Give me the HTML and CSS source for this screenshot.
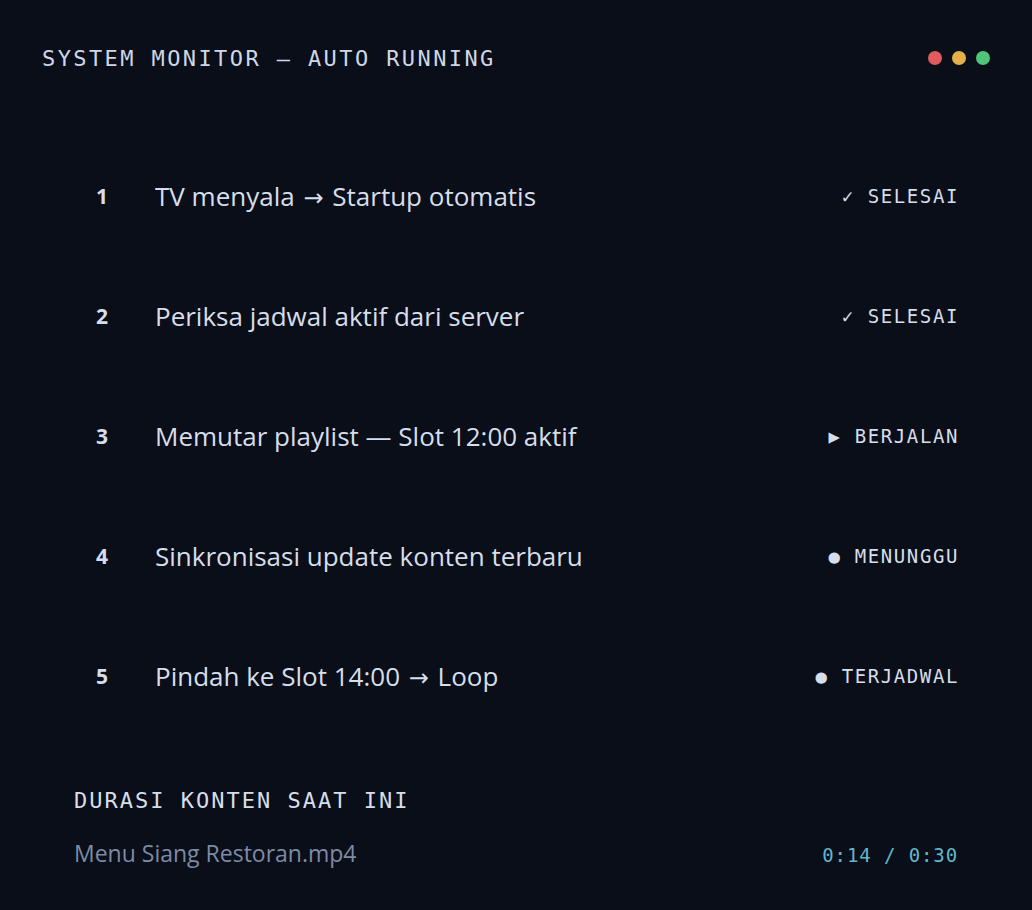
FILE: index.html
```html
<!DOCTYPE html>
<html>
<head>
<meta charset="utf-8">
<link rel="stylesheet" href="styles.css">
</head>
<body>
<div class="screen">
  <header class="top">
    <div class="title">SYSTEM MONITOR — AUTO RUNNING</div>
    <div class="dots"><span class="dot red"></span><span class="dot yellow"></span><span class="dot green"></span></div>
  </header>
  <ol class="steps">
    <li class="step"><span class="num">1</span><span class="label">TV menyala <span class="arr">→</span> Startup otomatis</span><span class="status">✓ SELESAI</span></li>
    <li class="step"><span class="num">2</span><span class="label">Periksa jadwal aktif dari server</span><span class="status">✓ SELESAI</span></li>
    <li class="step"><span class="num">3</span><span class="label">Memutar playlist — Slot 12:00 aktif</span><span class="status">▶ BERJALAN</span></li>
    <li class="step"><span class="num">4</span><span class="label">Sinkronisasi update konten terbaru</span><span class="status">● MENUNGGU</span></li>
    <li class="step"><span class="num">5</span><span class="label">Pindah ke Slot 14:00 <span class="arr">→</span> Loop</span><span class="status">● TERJADWAL</span></li>
  </ol>
  <section class="duration">
    <div class="dur-title">DURASI KONTEN SAAT INI</div>
    <div class="dur-row"><span class="file">Menu Siang Restoran.mp4</span><span class="time">0:14 / 0:30</span></div>
  </section>
</div>
</body>
</html>
```
FILE: styles.css
```css
html, body {
  margin: 0;
  padding: 0;
  background: #0a0e18;
}
.screen {
  width: 1032px;
  height: 910px;
  box-sizing: border-box;
  padding: 44px 42px 0 42px;
  color: #d6deeb;
  font-family: "Open Sans", "Noto Sans", sans-serif;
  font-variant-ligatures: none;
}
.top {
  display: flex;
  justify-content: space-between;
  align-items: center;
  height: 28px;
}
.title {
  font-family: "DejaVu Sans Mono", monospace;
  font-size: 22px;
  letter-spacing: 2.4px;
  color: #cfd7e6;
}
.dots {
  display: flex;
  gap: 10px;
}
.dot {
  width: 14px;
  height: 14px;
  border-radius: 50%;
}
.red { background: #e05a5e; }
.yellow { background: #e5b04a; }
.green { background: #4fc47b; }
.steps {
  list-style: none;
  margin: 64px 0 0 0;
  padding: 0 32px 0 54px;
}
.step {
  display: flex;
  align-items: center;
  height: 120px;
}
.num {
  width: 59px;
  font-weight: 700;
  font-size: 21px;
  color: #d6deeb;
}
.label {
  flex: 1;
  font-size: 26px;
  color: #d6deeb;
}
.arr {
  font-family: "DejaVu Sans", sans-serif;
  font-size: 24px;
  margin: 0 2px;
}
.status {
  font-family: "DejaVu Sans Mono", monospace;
  font-size: 19px;
  letter-spacing: 1.6px;
  color: #d6deeb;
  margin-right: -1px;
}
.duration {
  margin-top: 52px;
  padding: 0 32px 0 32px;
}
.dur-title {
  font-family: "DejaVu Sans Mono", monospace;
  font-size: 22px;
  letter-spacing: 2px;
  color: #d6deeb;
}
.dur-row {
  display: flex;
  justify-content: space-between;
  align-items: baseline;
  margin-top: 24px;
}
.file {
  font-size: 23px;
  color: #7d8ba6;
}
.time {
  font-family: "DejaVu Sans Mono", monospace;
  font-size: 19px;
  letter-spacing: 0.9px;
  color: #62b6cc;
}
```
